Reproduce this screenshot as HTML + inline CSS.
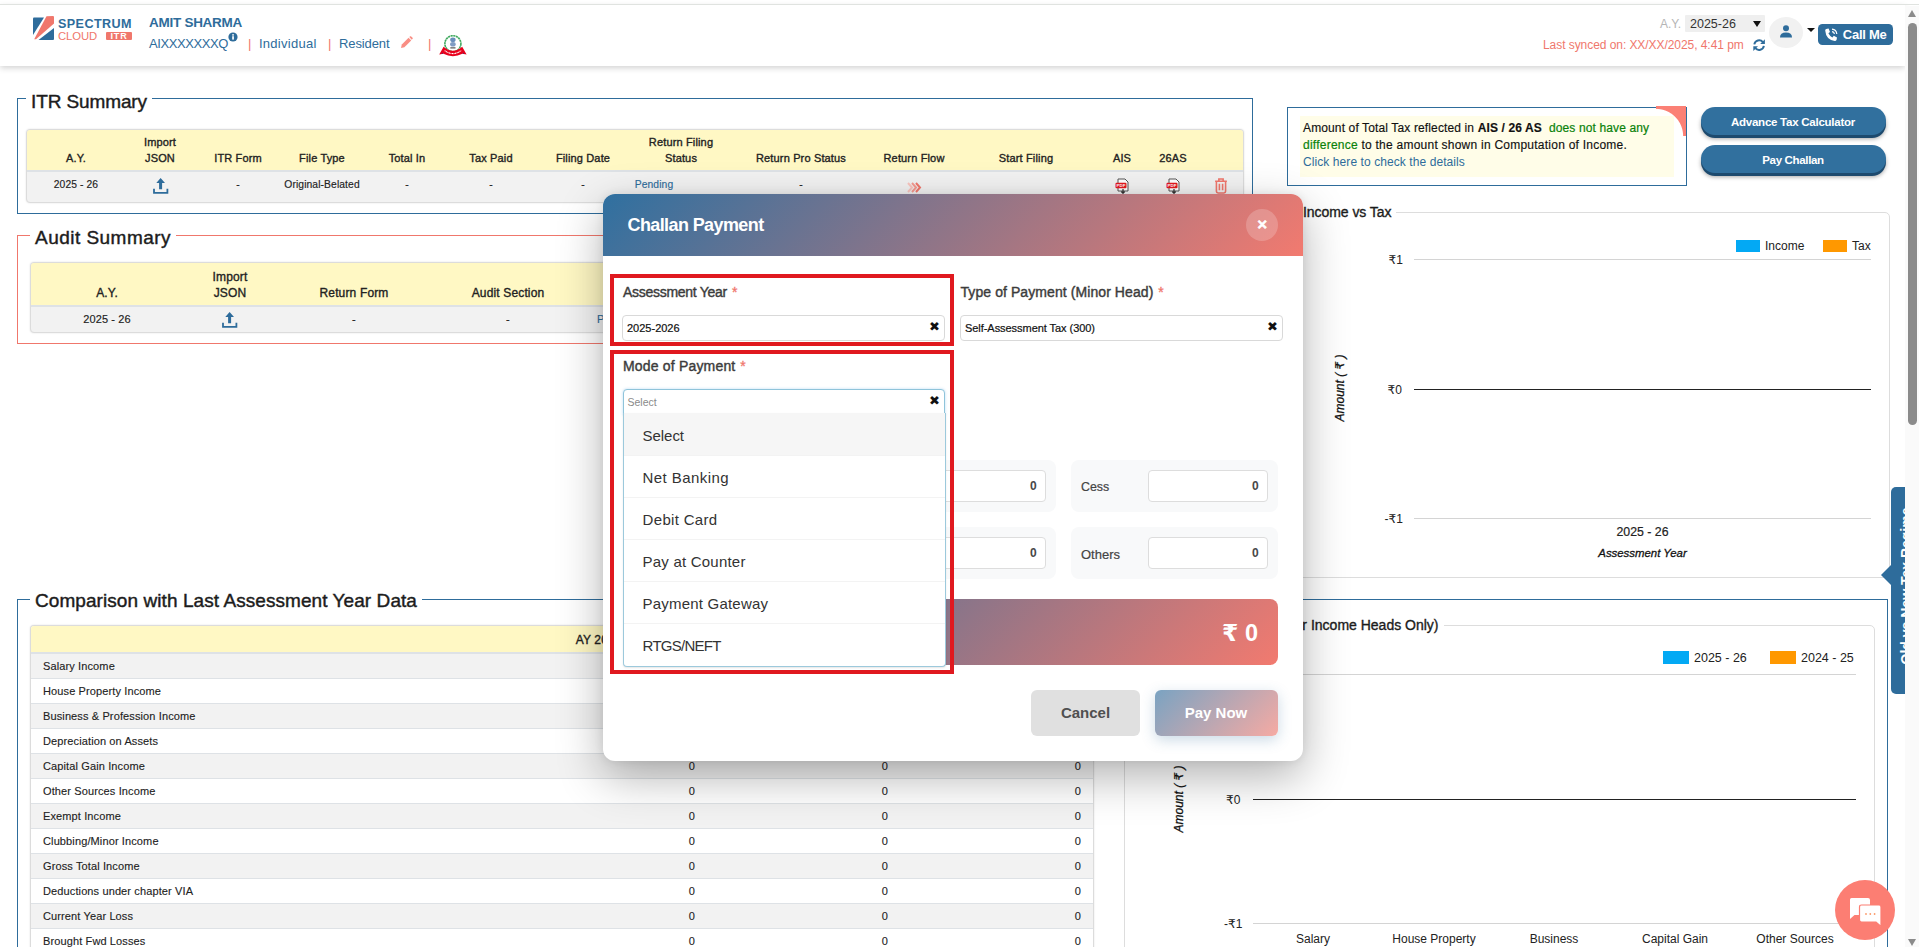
<!DOCTYPE html>
<html lang="en">
<head>
<meta charset="utf-8">
<title>Spectrum Cloud ITR</title>
<style>
*{box-sizing:border-box;margin:0;padding:0}
html,body{width:1919px;height:947px;overflow:hidden;background:#fff}
body{font-family:"Liberation Sans","DejaVu Sans",sans-serif;color:#222;position:relative;font-size:12px}
.abs{position:absolute}
.t{position:absolute;white-space:nowrap;line-height:1}
.c{transform:translateX(-50%)}
.blue{color:#2e6c9b !important}
.salmon{color:#f0776c}
/* header */
#topline{left:0;top:4px;width:1919px;height:1px;background:#e0e3e0}
#hdr{left:0;top:5px;width:1905px;height:61px;background:#fff;box-shadow:0 2px 6px rgba(0,0,0,.18)}
/* fieldsets */
.fs{position:absolute;border:1px solid #2e6c9b}
.lg{position:absolute;background:#fff;white-space:nowrap;line-height:1;color:#1c1c1c;-webkit-text-stroke:.42px #1c1c1c}
.tbl{position:absolute;border:1px solid #dcdcdc;border-radius:4px;overflow:hidden;background:#f2f2f2;box-shadow:0 0 2px rgba(0,0,0,.12)}
.th{position:absolute;left:0;right:0;top:0;background:#fff8c4;border-bottom:2px solid #dee2e6}
.h{position:absolute;white-space:nowrap;line-height:1;font-size:11px;font-weight:normal;-webkit-text-stroke:.35px #222;color:#222;transform:translateX(-50%);letter-spacing:.15px}
.d{position:absolute;white-space:nowrap;line-height:1;font-size:10.3px;color:#222;transform:translateX(-50%);letter-spacing:.1px;-webkit-text-stroke:.15px}

.rw{position:absolute;left:0;width:1062px;height:25px;border-bottom:1px solid #dee2e6;font-size:11px;line-height:24px;color:#222;letter-spacing:.12px;-webkit-text-stroke:.12px #222}
.rw:nth-child(even){background:#f2f2f2}
.rw span{position:absolute;left:12px;white-space:nowrap}
.rw i{position:absolute;font-style:normal;width:20px;text-align:right}
.rw i:nth-of-type(1){left:644px}.rw i:nth-of-type(2){left:837px}.rw i:nth-of-type(3){left:1030px}

.pill{width:185px;height:28px;border-radius:14px;background:#31709e;box-shadow:0 3px 0 #1d4a6e,0 4px 4px rgba(0,0,0,.35)}

.lbl{font-size:14px;color:#3c3c3c;-webkit-text-stroke:.4px #3c3c3c}
.lbl .salmon{-webkit-text-stroke:.3px #f0776c;margin-left:1px}
.inp{width:323px;height:26px;border:1px solid #d9d9d9;border-radius:4px;background:#fff}
.x{font-size:13px;color:#111}
.card{width:207px;height:52px;border-radius:8px;background:#f8f9fa}
.cin{width:120px;height:32px;border:1px solid #ddd;border-radius:4px;background:#fff}
.cv{font-size:12px;font-weight:bold;color:#484848}
.opt{height:42px;line-height:44px;padding-left:18.6px;font-size:15px;color:#333;white-space:nowrap;border-bottom:1px solid #f3f3f3}
</style>
</head>
<body>
<!-- ===== HEADER ===== -->
<div class="abs" id="hdr"></div>
<div class="abs" id="topline"></div>
<!--HEADER-START-->
<!-- logo -->
<svg class="abs" style="left:33px;top:16px" width="21" height="24" viewBox="0 0 21 24">
  <path d="M1 1.5 L11 1.5 L0 19 L0 2.5 Q0 1.5 1 1.5Z" fill="#2e6c9b"/>
  <path d="M13.5 0.3 L20 0 Q21 0 21 1 L21 7.5 L3 23.2 L1.2 23.2 Z" fill="#f0776c"/>
  <path d="M21 12 L21 23 Q21 24 20 24 L5.5 24 Z" fill="#2e6c9b"/>
</svg>
<div class="t" id="lg1" style="left:58px;top:17.5px;font-size:12.6px;font-weight:bold;color:#2e6c9b;letter-spacing:0.41px">SPECTRUM</div>
<div class="t" id="lg2" style="left:58px;top:30.5px;font-size:11.3px;color:#f0776c;letter-spacing:-0.11px">CLOUD</div>
<div class="t" id="lg3" style="left:106px;top:32px;width:26px;height:8px;background:#f0776c;color:#fff;font-size:9px;font-weight:bold;text-align:center;line-height:8.5px;letter-spacing:.8px;border-radius:1px;overflow:hidden">ITR</div>
<div class="t" id="nm" style="left:149px;top:16px;font-size:13.5px;font-weight:bold;color:#2e6c9b;letter-spacing:-0.27px">AMIT SHARMA</div>
<div class="t" id="pan" style="left:149px;top:37px;font-size:13px;color:#2e6c9b;letter-spacing:-0.41px">AIXXXXXXXQ</div>
<svg class="abs" style="left:228px;top:32px" width="10" height="10" viewBox="0 0 10 10"><circle cx="5" cy="5" r="4.6" fill="#2e6c9b"/><rect x="4.2" y="4.2" width="1.7" height="3.4" fill="#fff"/><rect x="4.2" y="2.2" width="1.7" height="1.4" fill="#fff"/></svg>
<div class="t salmon" style="left:248px;top:37px;font-size:13px">|</div>
<div class="t blue" id="ind" style="left:259px;top:37px;font-size:13px;letter-spacing:0.26px">Individual</div>
<div class="t salmon" style="left:328px;top:37px;font-size:13px">|</div>
<div class="t blue" id="res" style="left:339px;top:37px;font-size:13px;letter-spacing:-0.1px">Resident</div>
<svg class="abs" style="left:400px;top:36px" width="13" height="13" viewBox="0 0 13 13"><path d="M1 12 L1.8 8.6 L8.6 1.8 L11.2 4.4 L4.4 11.2 Z" fill="#f98e84"/><path d="M9.3 1.1 L10.2 .3 Q10.7 0 11.2 .4 L12.6 1.8 Q13 2.3 12.6 2.8 L11.8 3.7Z" fill="#f98e84"/></svg>
<div class="t salmon" style="left:428px;top:37px;font-size:13px">|</div>
<!-- emblem -->
<svg class="abs" style="left:439px;top:34.5px" width="28" height="22" viewBox="0 0 28 22">
  <circle cx="13.9" cy="8.7" r="8" fill="#fff" stroke="#3fa95e" stroke-width="1.6" stroke-dasharray="2.2 .5"/>
  <ellipse cx="13.9" cy="4.8" rx="2.7" ry="2.3" fill="#6a8fbd"/>
  <ellipse cx="13.9" cy="9.3" rx="2.8" ry="2.3" fill="#7f9cc4"/>
  <rect x="11.3" y="12.4" width="5.2" height="1" fill="#333"/>
  <path d="M4.6 11.8 Q13.9 19.8 23.2 11.8 L27.6 19.6 L23.4 18.8 Q13.9 23.6 4.4 18.8 L0.2 19.6 Z" fill="#e8001c"/>
  <path d="M2.6 17.6 L4.4 18.8 L3.4 19 Z M25.2 17.6 L23.4 18.8 L24.4 19 Z" fill="#1d3c8f"/>
  <path d="M5.6 15.6 Q13.9 21.6 22.2 15.6" fill="none" stroke="#fff" stroke-width="1.1" stroke-dasharray="1.1 .5"/>
</svg>
<!-- right header -->
<div class="t" style="left:1660px;top:18px;font-size:12px;color:#b5b5b5">A.Y.</div>
<div class="abs" style="left:1685px;top:15px;width:80px;height:17px;background:#efefef;border-radius:1px"></div>
<div class="t" id="aysel" style="left:1690px;top:18px;font-size:12.5px;color:#333">2025-26</div>
<div class="abs" style="left:1753px;top:21px;width:0;height:0;border-left:4.5px solid transparent;border-right:4.5px solid transparent;border-top:6px solid #111"></div>
<div class="t salmon" id="sync" style="left:1543px;top:39px;font-size:12px;letter-spacing:-0.06px">Last synced on: XX/XX/2025, 4:41 pm</div>
<svg class="abs" style="left:1752.8px;top:38.8px" width="12.2" height="12.2" viewBox="0 0 12 12" fill="none" stroke="#2e6c9b" stroke-width="1.9"><path d="M1.3 5.3 A4.8 4.8 0 0 1 9.7 3"/><path d="M10.7 6.7 A4.8 4.8 0 0 1 2.3 9"/><path d="M11.7 0.3 L11.7 4.9 L7.1 4.9 Z" fill="#2e6c9b" stroke="none"/><path d="M0.3 11.7 L0.3 7.1 L4.9 7.1 Z" fill="#2e6c9b" stroke="none"/></svg>
<div class="abs" style="left:1769px;top:17px;width:34px;height:31px;border-radius:50%;background:#f1f1f1"></div>
<svg class="abs" style="left:1779px;top:25px" width="14" height="13" viewBox="0 0 14 13"><circle cx="7" cy="3.2" r="3" fill="#2e6c9b"/><path d="M1 12.5 Q1 7.5 7 7.5 Q13 7.5 13 12.5 Z" fill="#2e6c9b"/></svg>
<div class="abs" style="left:1807px;top:28px;width:0;height:0;border-left:4px solid transparent;border-right:4px solid transparent;border-top:4px solid #111"></div>
<div class="abs" style="left:1818px;top:24px;width:75px;height:21px;background:#2e6c9b;border-radius:4.5px"></div>
<svg class="abs" style="left:1824px;top:28px" width="14" height="14" viewBox="0 0 14 14"><path d="M2.2 1 L4.6 .6 L6 4 L4.4 5.2 Q5.6 7.8 8.4 9.4 L9.8 7.8 L13 9.4 L12.6 11.8 Q12.2 13 10.8 13 Q2 12 1.2 2.6 Q1.2 1.4 2.2 1Z" fill="#fff"/><path d="M8 1.2 Q12.4 1.6 12.8 6 M8 3.6 Q10.2 3.8 10.4 6" fill="none" stroke="#fff" stroke-width="1.2"/></svg>
<div class="t" id="callme" style="left:1842.8px;top:28px;font-size:13px;font-weight:bold;color:#fff;letter-spacing:-0.27px">Call Me</div>
<!--HEADER-END-->
<!--LEFT-START-->
<!-- ITR Summary -->
<div class="fs" style="left:17px;top:98px;width:1236px;height:116px"></div>
<div class="lg" id="lgitr" style="left:26px;top:92px;padding:0 5px;font-size:19px;letter-spacing:-0.11px">ITR Summary</div>
<div class="tbl" id="itrtbl" style="left:26px;top:129px;width:1218px;height:74px">
  <div class="th" style="height:42px"></div>
</div>
<div class="h" style="left:76px;top:153px">A.Y.</div>
<div class="h" style="left:160px;top:137px">Import</div>
<div class="h" style="left:160px;top:153px">JSON</div>
<div class="h" style="left:238px;top:153px">ITR Form</div>
<div class="h" style="left:322px;top:153px">File Type</div>
<div class="h" style="left:407px;top:153px">Total In</div>
<div class="h" style="left:491px;top:153px">Tax Paid</div>
<div class="h" style="left:583px;top:153px">Filing Date</div>
<div class="h" style="left:681px;top:137px">Return Filing</div>
<div class="h" style="left:681px;top:153px">Status</div>
<div class="h" style="left:801px;top:153px">Return Pro Status</div>
<div class="h" style="left:914px;top:153px">Return Flow</div>
<div class="h" style="left:1026px;top:153px">Start Filing</div>
<div class="h" style="left:1122px;top:153px">AIS</div>
<div class="h" style="left:1173px;top:153px">26AS</div>
<div class="d" style="left:76px;top:180px">2025 - 26</div>
<svg class="abs upl" style="left:152px;top:177px" width="17" height="18" viewBox="0 0 17 18"><path d="M8.6 1 L13 6 L10.1 6 L10.1 12.2 L7.1 12.2 L7.1 6 L4.3 6 Z" fill="#2e6c9b"/><path d="M2 11.8 L2 15.9 L15.4 15.9 L15.4 11.8" fill="none" stroke="#2e6c9b" stroke-width="1.8"/></svg>
<div class="d" style="left:238px;top:180px">-</div>
<div class="d" style="left:322px;top:180px">Original-Belated</div>
<div class="d" style="left:407px;top:180px">-</div>
<div class="d" style="left:491px;top:180px">-</div>
<div class="d" style="left:583px;top:180px">-</div>
<div class="d blue" style="left:654px;top:180px">Pending</div>
<div class="d" style="left:801px;top:180px">-</div>
<svg class="abs" style="left:907px;top:182px" width="15" height="11" viewBox="0 0 15 11" fill="none" stroke-width="2"><path d="M1 1 L5 5.5 L1 10" stroke="#f9c4be"/><path d="M5 1 L9 5.5 L5 10" stroke="#f59a90"/><path d="M9 1 L13 5.5 L9 10" stroke="#f0776c"/></svg>
<!-- pdf icons -->
<svg class="abs" style="left:1115px;top:178px" width="15" height="16" viewBox="0 0 15 16"><path d="M3 1 L10 1 L13 4 L13 13 L3 13 Z" fill="#fff" stroke="#555" stroke-width="1"/><rect x="0.5" y="4.8" width="11" height="5.4" rx="1" fill="#e6191f"/><text x="6" y="9.1" font-size="4.4" font-weight="bold" fill="#fff" text-anchor="middle" font-family="Liberation Sans, sans-serif">PDF</text><path d="M8 11 L8 15 M6.3 13.5 L8 15.3 L9.7 13.5" stroke="#333" stroke-width="1.2" fill="none"/></svg>
<svg class="abs" style="left:1166px;top:178px" width="15" height="16" viewBox="0 0 15 16"><path d="M3 1 L10 1 L13 4 L13 13 L3 13 Z" fill="#fff" stroke="#555" stroke-width="1"/><rect x="0.5" y="4.8" width="11" height="5.4" rx="1" fill="#e6191f"/><text x="6" y="9.1" font-size="4.4" font-weight="bold" fill="#fff" text-anchor="middle" font-family="Liberation Sans, sans-serif">PDF</text><path d="M8 11 L8 15 M6.3 13.5 L8 15.3 L9.7 13.5" stroke="#333" stroke-width="1.2" fill="none"/></svg>
<svg class="abs" style="left:1214px;top:178px" width="14" height="16" viewBox="0 0 13 15" fill="none" stroke="#f0776c" stroke-width="1.5"><path d="M1 3 L12 3 M4.5 3 L4.5 1 L8.5 1 L8.5 3"/><path d="M2.2 3 L2.2 12.5 Q2.2 14 3.7 14 L9.3 14 Q10.8 14 10.8 12.5 L10.8 3"/><path d="M5 5.5 L5 11.5 M8 5.5 L8 11.5"/></svg>

<!-- Audit Summary -->
<div class="fs" style="left:17px;top:235px;width:1236px;height:109px;border-color:#f0776c"></div>
<div class="lg" id="lgaud" style="left:30px;top:228px;padding:0 5px;font-size:19px;letter-spacing:0.47px">Audit Summary</div>
<div class="tbl" style="left:30px;top:262px;width:1210px;height:71px">
  <div class="th" style="height:43.5px"></div>
</div>
<div class="h" style="left:107px;top:287px;font-size:12px">A.Y.</div>
<div class="h" style="left:230px;top:271px;font-size:12px">Import</div>
<div class="h" style="left:230px;top:287px;font-size:12px">JSON</div>
<div class="h" style="left:354px;top:287px;font-size:12px">Return Form</div>
<div class="h" style="left:508px;top:287px;font-size:12px">Audit Section</div>
<div class="d" style="left:107px;top:314px;font-size:11px">2025 - 26</div>
<svg class="abs upl" style="left:221px;top:311px" width="17" height="18" viewBox="0 0 17 18"><path d="M8.6 1 L13 6 L10.1 6 L10.1 12.2 L7.1 12.2 L7.1 6 L4.3 6 Z" fill="#2e6c9b"/><path d="M2 11.8 L2 15.9 L15.4 15.9 L15.4 11.8" fill="none" stroke="#2e6c9b" stroke-width="1.8"/></svg>
<div class="d" style="left:354px;top:314px;font-size:11px">-</div>
<div class="d" style="left:508px;top:314px;font-size:11px">-</div>
<div class="d blue" style="left:617.5px;top:314px;font-size:11px">Pending</div>

<!-- Comparison -->
<div class="fs" style="left:17px;top:599px;width:1871px;height:400px"></div>
<div class="lg" id="lgcmp" style="left:30px;top:591px;padding:0 5px;font-size:19px;letter-spacing:0.07px">Comparison with Last Assessment Year Data</div>
<div class="tbl" id="cmptbl" style="left:30px;top:625px;width:1064px;height:400px;background:#fff;border-bottom:none">
  <div class="th" style="height:28px"></div>
  <div class="rw" style="top:28px"><span>Salary Income</span><i>0</i><i>0</i><i>0</i></div>
  <div class="rw" style="top:53px"><span>House Property Income</span><i>0</i><i>0</i><i>0</i></div>
  <div class="rw" style="top:78px"><span>Business &amp; Profession Income</span><i>0</i><i>0</i><i>0</i></div>
  <div class="rw" style="top:103px"><span>Depreciation on Assets</span><i>0</i><i>0</i><i>0</i></div>
  <div class="rw" style="top:128px"><span>Capital Gain Income</span><i>0</i><i>0</i><i>0</i></div>
  <div class="rw" style="top:153px"><span>Other Sources Income</span><i>0</i><i>0</i><i>0</i></div>
  <div class="rw" style="top:178px"><span>Exempt Income</span><i>0</i><i>0</i><i>0</i></div>
  <div class="rw" style="top:203px"><span>Clubbing/Minor Income</span><i>0</i><i>0</i><i>0</i></div>
  <div class="rw" style="top:228px"><span>Gross Total Income</span><i>0</i><i>0</i><i>0</i></div>
  <div class="rw" style="top:253px"><span>Deductions under chapter VIA</span><i>0</i><i>0</i><i>0</i></div>
  <div class="rw" style="top:278px"><span>Current Year Loss</span><i>0</i><i>0</i><i>0</i></div>
  <div class="rw" style="top:303px"><span>Brought Fwd Losses</span><i>0</i><i>0</i><i>0</i></div>
</div>
<div class="h" style="left:611px;top:634px;font-size:12px">AY 2025 - 26</div>
<div class="h" style="left:804px;top:634px;font-size:12px">AY 2024 - 25</div>
<div class="h" style="left:997px;top:634px;font-size:12px">Difference</div>
<!--LEFT-END-->
<!--RIGHT-START-->
<!-- notice -->
<div class="abs" style="left:1287px;top:107px;width:400px;height:79px;border:1px solid #2e6c9b;background:#fff;overflow:hidden">
  <div class="abs" style="left:12px;top:8px;width:374px;height:61px;background:#fffde8"></div>
</div>
<div class="abs" style="left:1656px;top:106px;width:30px;height:30px;background:radial-gradient(circle at 0 100%,rgba(251,128,117,0) 26.6px,#fb8075 27.6px)"></div>
<div class="t" id="n1" style="left:1303px;top:122px;font-size:12px;color:#111;-webkit-text-stroke:.15px #111;letter-spacing:0.13px">Amount of Total Tax reflected in <b>AIS / 26 AS</b>&nbsp; <span style="color:#0a820a;-webkit-text-stroke:.2px #0a820a">does not have any</span></div>
<div class="t" id="n2" style="left:1303px;top:139px;font-size:12px;color:#111;-webkit-text-stroke:.15px #111;letter-spacing:0.24px"><span style="color:#0a820a;-webkit-text-stroke:.2px #0a820a">difference</span> to the amount shown in Computation of Income.</div>
<div class="t blue" id="n3" style="left:1303px;top:156px;font-size:12px;letter-spacing:0.08px">Click here to check the details</div>
<!-- buttons -->
<div class="abs pill" style="left:1701px;top:107px"></div>
<div class="t c" id="b1" style="left:1793px;top:116.5px;font-size:11.5px;font-weight:bold;color:#fff;letter-spacing:-0.25px">Advance Tax Calculator</div>
<div class="abs pill" style="left:1701px;top:145px"></div>
<div class="t c" id="b2" style="left:1793px;top:155px;font-size:11.5px;font-weight:bold;color:#fff;letter-spacing:-0.34px">Pay Challan</div>

<!-- Income vs Tax -->
<div class="abs" style="left:1200px;top:212px;width:690px;height:366px;border:1px solid #ddd;border-radius:5px"></div>
<div class="lg" id="lgivt" style="left:1298px;top:205px;padding:0 5px;font-size:14px;-webkit-text-stroke-width:.35px;letter-spacing:-0.06px">Income vs Tax</div>
<div class="abs" style="left:1736px;top:240px;width:24px;height:12px;background:#03a9f4"></div>
<div class="t" style="left:1765px;top:240px;font-size:12px;color:#222">Income</div>
<div class="abs" style="left:1823px;top:240px;width:24px;height:12px;background:#ff9800"></div>
<div class="t" style="left:1852px;top:240px;font-size:12px;color:#222">Tax</div>
<div class="abs" style="left:1414px;top:259px;width:457px;height:1px;background:#d4d4d4"></div>
<div class="abs" style="left:1414px;top:388.5px;width:457px;height:1px;background:#222"></div>
<div class="abs" style="left:1414px;top:518px;width:457px;height:1px;background:#d4d4d4"></div>
<div class="t" style="left:1388.5px;top:254px;font-size:12px;color:#222">₹1</div>
<div class="t" style="left:1387.5px;top:383.5px;font-size:12px;color:#222">₹0</div>
<div class="t" style="left:1384.5px;top:513px;font-size:12px;color:#222">-₹1</div>
<div class="t c" style="left:1642.5px;top:526px;font-size:12.3px;color:#222;-webkit-text-stroke:.2px #222">2025 - 26</div>
<div class="t c" style="left:1642.5px;top:548px;font-size:11.4px;font-style:italic;color:#111;-webkit-text-stroke:.3px #111">Assessment Year</div>
<div class="t" style="left:1340px;top:388px;font-size:12px;font-style:italic;color:#111;-webkit-text-stroke:.3px #111;transform:translate(-50%,-50%) rotate(-90deg)">Amount ( ₹ )</div>

<!-- chart 2 -->
<div class="abs" style="left:1124px;top:625px;width:751px;height:400px;border:1px solid #ddd;border-radius:5px"></div>
<div class="lg" id="lgc2" style="left:1183px;top:618px;padding:0 5px;font-size:14px;-webkit-text-stroke-width:.35px">Comparison (Major Income Heads Only)</div>
<div class="abs" style="left:1663px;top:651px;width:26px;height:13px;background:#03a9f4"></div>
<div class="t" style="left:1694px;top:652px;font-size:12.5px;color:#222">2025 - 26</div>
<div class="abs" style="left:1770px;top:651px;width:26px;height:13px;background:#ff9800"></div>
<div class="t" style="left:1801px;top:652px;font-size:12.5px;color:#222">2024 - 25</div>
<div class="abs" style="left:1253px;top:674px;width:603px;height:1px;background:#d4d4d4"></div>
<div class="abs" style="left:1253px;top:799px;width:603px;height:1px;background:#222"></div>
<div class="abs" style="left:1253px;top:923px;width:603px;height:1px;background:#d4d4d4"></div>
<div class="t" style="left:1226px;top:794px;font-size:12px;color:#222">₹0</div>
<div class="t" style="left:1224px;top:918px;font-size:12px;color:#222">-₹1</div>
<div class="t" style="left:1179px;top:799px;font-size:12px;font-style:italic;color:#111;-webkit-text-stroke:.3px #111;transform:translate(-50%,-50%) rotate(-90deg)">Amount ( ₹ )</div>
<div class="t c" style="left:1313px;top:933px;font-size:12px;color:#222">Salary</div>
<div class="t c" style="left:1434px;top:933px;font-size:12px;color:#222">House Property</div>
<div class="t c" style="left:1554px;top:933px;font-size:12px;color:#222">Business</div>
<div class="t c" style="left:1675px;top:933px;font-size:12px;color:#222">Capital Gain</div>
<div class="t c" style="left:1795px;top:933px;font-size:12px;color:#222">Other Sources</div>
<!--RIGHT-END-->
<!--FLOAT-START-->
<!-- side tab -->
<div class="abs" style="left:1891px;top:487px;width:14px;height:207px;background:#2e6c9b;border-radius:5px 0 0 5px;overflow:hidden">
  <div class="t" id="sidetxt" style="left:14.5px;top:99px;font-size:14px;font-weight:bold;color:#fff;transform:translate(-50%,-50%) rotate(-90deg)">Old vs New Tax Regime</div>
</div>
<div class="abs" style="left:1881px;top:565px;width:0;height:0;border-top:10px solid transparent;border-bottom:10px solid transparent;border-right:10px solid #2e6c9b"></div>
<!-- scrollbar -->
<div class="abs" style="left:1905px;top:6px;width:14px;height:941px;background:#fafafa"></div>
<div class="abs" style="left:1908px;top:23px;width:9px;height:402px;background:#8b8b8b;border-radius:5px"></div>
<div class="abs" style="left:1908px;top:10px;width:0;height:0;border-left:4.5px solid transparent;border-right:4.5px solid transparent;border-bottom:7px solid #8b8b8b"></div>
<div class="abs" style="left:1908px;top:939px;width:0;height:0;border-left:4.5px solid transparent;border-right:4.5px solid transparent;border-top:7px solid #8b8b8b"></div>
<!-- chat -->
<div class="abs" style="left:1835px;top:880px;width:60px;height:60px;border-radius:50%;background:#fc7e73"></div>
<svg class="abs" style="left:1849px;top:897px" width="33" height="30" viewBox="0 0 33 30"><path d="M2.5 1 L19 1 Q21 1 21 3 L21 16 Q21 18 19 18 L5.5 18 L1 22 L1 2.5 Q1 1 2.5 1Z" fill="#fff"/><path d="M12.5 8 L30 8 Q32 8 32 10 L32 29.5 L27 25 L12.5 25 Q10.5 25 10.5 23 L10.5 10 Q10.5 8 12.5 8Z" fill="#fff" stroke="#fc7e73" stroke-width="1.2"/><circle cx="17" cy="17" r=".9" fill="#fc9a6a"/><circle cx="21.3" cy="17" r=".9" fill="#fc9a6a"/><circle cx="25.6" cy="17" r=".9" fill="#fc9a6a"/></svg>
<!--FLOAT-END-->
<!--MODAL-START-->
<div class="abs" id="modal" style="left:603px;top:194px;width:700px;height:567px;background:#fff;border-radius:12px;box-shadow:0 16px 46px rgba(0,0,0,.3),0 0 10px rgba(0,0,0,.08);overflow:hidden">
  <div class="abs" style="left:0;top:0;width:700px;height:62px;background:linear-gradient(135deg,#2f70a0 0%,#f27a6f 100%)"></div>
  <div class="t" id="mtitle" style="left:24.5px;top:22px;font-size:18px;font-weight:bold;color:#fff;letter-spacing:-0.6px">Challan Payment</div>
  <div class="abs" style="left:643px;top:14.8px;width:32px;height:32px;border-radius:50%;background:rgba(255,255,255,.2)"></div>
  <div class="t" id="mx" style="left:654.2px;top:22.1px;font-size:17px;font-weight:bold;color:#fff;-webkit-text-stroke:.5px #fff">×</div>
  <!-- row 1 -->
  <div class="t lbl" style="left:20px;top:91px"><span id="l1" style="letter-spacing:-0.28px">Assessment Year</span> <span class="salmon">*</span></div>
  <div class="abs inp" style="left:19px;top:121px"></div>
  <div class="t" style="left:24px;top:129px;font-size:11px;color:#111;-webkit-text-stroke:.2px #111">2025-2026</div>
  <div class="t x" style="left:326px;top:126px">✖</div>
  <div class="t lbl" style="left:357.5px;top:91px"><span id="l2" style="letter-spacing:0.08px">Type of Payment (Minor Head)</span> <span class="salmon">*</span></div>
  <div class="abs inp" style="left:357px;top:121px"></div>
  <div class="t" style="left:362px;top:129px;font-size:11px;color:#111;-webkit-text-stroke:.2px #111;letter-spacing:-.05px">Self-Assessment Tax (300)</div>
  <div class="t x" style="left:664px;top:126px">✖</div>
  <!-- background cards -->
  <div class="abs card" style="left:246px;top:266px"></div>
  <div class="abs card" style="left:468px;top:266px"></div>
  <div class="abs card" style="left:246px;top:333px"></div>
  <div class="abs card" style="left:468px;top:333px"></div>
  <div class="abs cin" style="left:323px;top:276px"></div><div class="t cv" style="left:427px;top:286px">0</div>
  <div class="abs cin" style="left:545px;top:276px"></div><div class="t cv" style="left:649px;top:286px">0</div>
  <div class="abs cin" style="left:323px;top:343px"></div><div class="t cv" style="left:427px;top:353px">0</div>
  <div class="abs cin" style="left:545px;top:343px"></div><div class="t cv" style="left:649px;top:353px">0</div>
  <div class="t" style="left:478px;top:286.5px;font-size:12.4px;color:#444;-webkit-text-stroke:.2px #444">Cess</div>
  <div class="t" style="left:478px;top:353.5px;font-size:13px;color:#444;-webkit-text-stroke:.2px #444">Others</div>
  <!-- total -->
  <div class="abs" style="left:24px;top:405px;width:651px;height:66px;border-radius:8px;background:linear-gradient(135deg,#2f70a0 0%,#f27a6f 100%)"></div>
  <div class="t" id="tot" style="right:45px;top:428px;font-size:23.5px;font-weight:bold;color:#fff">₹ 0</div>
  <!-- buttons -->
  <div class="abs" style="left:428px;top:496px;width:109px;height:46px;border-radius:6px;background:#e0e0e0"></div>
  <div class="t c" style="left:482.5px;top:511px;font-size:15px;font-weight:bold;color:#505050">Cancel</div>
  <div class="abs" style="left:552px;top:496px;width:123px;height:46px;border-radius:6px;background:linear-gradient(135deg,#7aa3c2 0%,#f6aaa3 100%);box-shadow:0 4px 14px rgba(46,108,155,.25)"></div>
  <div class="t c" style="left:613px;top:511px;font-size:15px;font-weight:bold;color:#fff">Pay Now</div>
  <!-- mode of payment -->
  <div class="t lbl" style="left:20px;top:165px"><span id="l3" style="letter-spacing:0.18px">Mode of Payment</span> <span class="salmon">*</span></div>
  <div class="abs inp" style="left:20px;top:195px;width:322px;border-color:#8fc4da;border-radius:4px 4px 0 0;box-shadow:0 0 3px rgba(102,175,233,.45)"></div>
  <div class="t" style="left:24.5px;top:202.8px;font-size:10.5px;color:#8a8a8a">Select</div>
  <div class="t x" style="left:326px;top:200px">✖</div>
  <div class="abs" id="dd" style="left:20px;top:219px;width:323px;height:254px;background:#fff;border:1px solid #9cc9dc;border-top:none;border-radius:0 0 4px 4px;box-shadow:0 1px 2px rgba(0,0,0,.1)">
    <div class="opt" style="background:#f6f6f6;height:43px;line-height:46px"><span id="o0" style="letter-spacing:-0.05px">Select</span></div>
    <div class="opt"><span id="o1" style="letter-spacing:0.42px">Net Banking</span></div>
    <div class="opt"><span id="o2" style="letter-spacing:0.32px">Debit Card</span></div>
    <div class="opt"><span id="o3" style="letter-spacing:0.21px">Pay at Counter</span></div>
    <div class="opt"><span id="o4" style="letter-spacing:0.2px">Payment Gateway</span></div>
    <div class="opt" style="border-bottom:none"><span id="o5" style="letter-spacing:-0.75px">RTGS/NEFT</span></div>
  </div>
  <!-- red highlight boxes -->
  <div class="abs" style="left:7px;top:80px;width:344px;height:72px;border:4px solid #e0191f"></div>
  <div class="abs" style="left:7px;top:156px;width:344px;height:324px;border:4px solid #e0191f"></div>
</div>
<!--MODAL-END-->
</body>
</html>
